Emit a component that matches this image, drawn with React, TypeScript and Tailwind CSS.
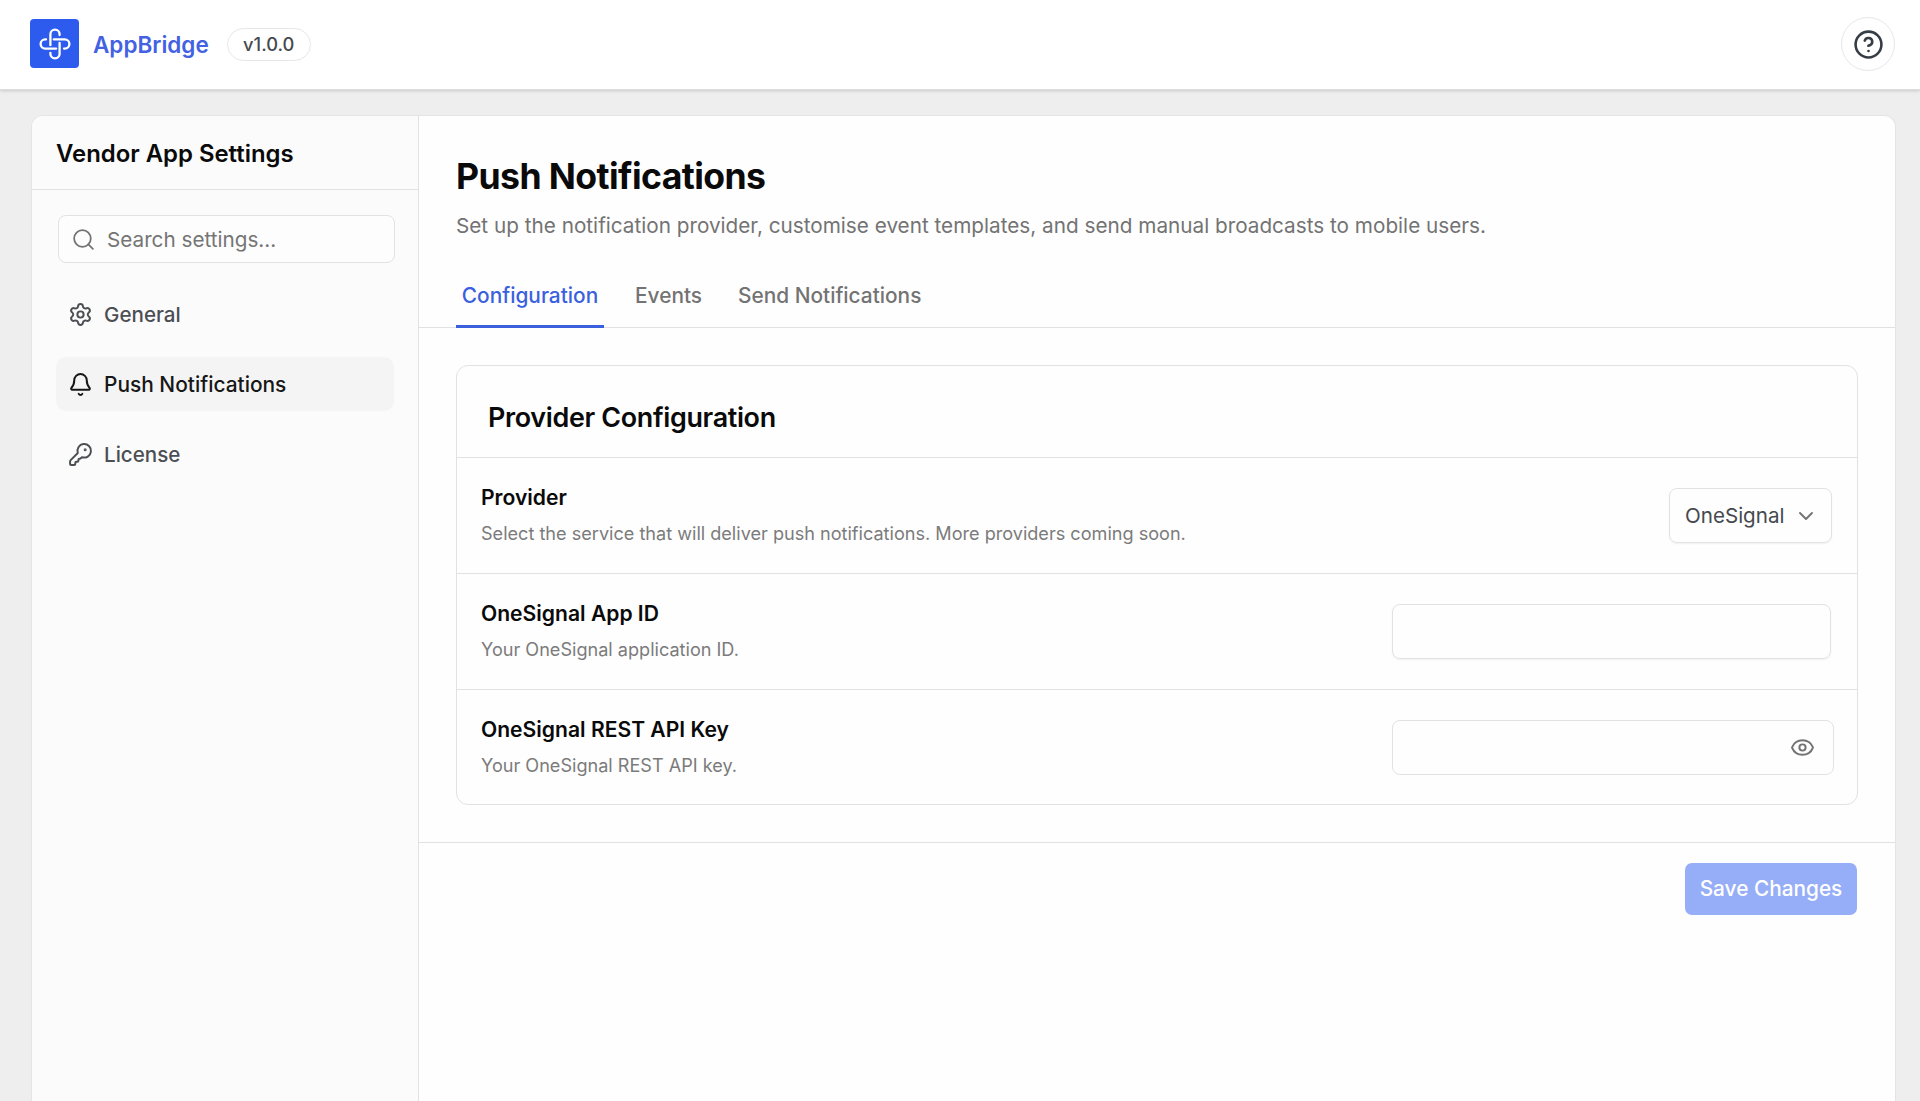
import React from "react";
import { Bell, ChevronDown, CircleHelp, Eye, KeyRound, Search, Settings } from "lucide-react";

const navItems = [
  { label: "General", icon: Settings, active: false },
  { label: "Push Notifications", icon: Bell, active: true },
  { label: "License", icon: KeyRound, active: false },
];

const LogoMark = () => (
  <svg
    viewBox="-16 -16 32 32"
    className="size-8"
    fill="none"
    stroke="white"
    strokeWidth="2.3"
    strokeLinecap="round"
  >
    {[0, 90, 180, 270].map((angle) => (
      <path
        key={angle}
        d="M-4.6 1.2V-9.8a4.6 4.6 0 0 1 9.2 0V-9"
        transform={`rotate(${angle})`}
      />
    ))}
  </svg>
);

const Header = () => (
  <header className="z-10 flex h-[90px] shrink-0 items-center border-b border-[#dedede] bg-white pr-[25px] pb-px pl-[30px] shadow-[0_1px_3px_rgba(0,0,0,0.16)]">
    <div className="mb-px flex size-[49px] items-center justify-center rounded-[4px] bg-[#2d5bee]">
      <LogoMark />
    </div>
    <span className="ml-3.5 pt-px text-[22.5px] font-semibold text-[#4361e2]">AppBridge</span>
    <span className="ml-[18px] flex h-[33px] w-[84px] items-center justify-center rounded-full border border-[#e5e7eb] pt-px text-[18.3px] font-medium text-[#45494f]">
      v1.0.0
    </span>
    <button className="ml-auto flex size-[54px] items-center justify-center rounded-full border border-[#e5e7eb]">
      <CircleHelp className="size-[31px] text-[#373d47]" strokeWidth={2} />
    </button>
  </header>
);

const Sidebar = () => (
  <aside className="w-[387px] shrink-0 border-r border-[#e2e2e2] bg-[#fbfbfb]">
    <div className="flex h-[74px] items-center border-b border-[#e2e2e2] pt-0.5 pl-6">
      <h2 className="text-[23.9px] font-semibold text-[#0a0a0a]">Vendor App Settings</h2>
    </div>
    <div className="mt-[25px] mr-[23px] ml-[26px] flex h-12 items-center rounded-lg border border-[#e2e2e2] bg-[#fdfdfd] pl-3">
      <Search className="size-[25px] text-[#737373]" strokeWidth={1.7} />
      <span className="ml-[11px] pt-px text-[20.7px] text-[#757575]">Search settings...</span>
    </div>
    <nav className="mt-6 mr-6 ml-6 flex flex-col gap-4">
      {navItems.map(({ label, icon: Icon, active }) =>
        active ? (
          <a
            key={label}
            className="flex h-[54px] items-center gap-[11px] rounded-[10px] bg-[#f4f4f4] pl-3 text-[20.9px] font-medium text-[#171717]"
          >
            <Icon className="size-[25px]" strokeWidth={1.9} />
            <span className="pt-0.5">{label}</span>
          </a>
        ) : (
          <a
            key={label}
            className="flex h-[54px] items-center gap-[11px] pl-3 text-[20.6px] font-medium text-[#4b4e53]"
          >
            <Icon className="size-[25px]" strokeWidth={1.9} />
            <span className="pt-0.5">{label}</span>
          </a>
        )
      )}
    </nav>
  </aside>
);

const Tabs = () => (
  <div className="flex h-[60px] gap-6 border-b border-[#e2e2e2] pl-[37px] text-[20.85px] font-medium text-[#737373]">
    <div className="-mb-px flex w-[148px] justify-center border-b-3 border-[#3b60de] pt-3 text-[#3b60de]">
      Configuration
    </div>
    <div className="w-[85px] pt-3 pl-[7px]">Events</div>
    <div className="pt-3 pl-px">Send Notifications</div>
  </div>
);

type SettingRowProps = {
  title: string;
  description: string;
  children: React.ReactNode;
};

const SettingRow = ({ title, description, children }: SettingRowProps) => (
  <div className="flex h-[116px] items-center justify-between border-t border-[#e2e2e2] pr-[25px] pl-6 last:h-[115px]">
    <div className="pb-0.5">
      <h4 className="text-[21.1px] leading-8 font-semibold text-[#0a0a0a]">{title}</h4>
      <p className="mt-[5px] text-[18.1px] leading-7 text-[#7b7b7b]">{description}</p>
    </div>
    {children}
  </div>
);

const ProviderCard = () => (
  <section className="mx-[37px] mt-[37px] rounded-xl border border-[#e2e2e2]">
    <h3 className="h-[91px] pt-[34px] pl-[31px] text-[26.9px] leading-[34px] font-semibold tracking-[-0.33px] text-[#0a0a0a]">
      Provider Configuration
    </h3>
    <SettingRow
      title="Provider"
      description="Select the service that will deliver push notifications. More providers coming soon."
    >
      <button className="flex h-[55px] w-[163px] items-center rounded-lg border border-[#e2e2e2] pl-[15px] text-[20.6px] text-[#45494f] shadow-[0_1px_2px_rgba(0,0,0,0.06)]">
        <span className="pt-0.5">OneSignal</span>
        <ChevronDown className="ml-2.5 size-6 text-[#737373]" strokeWidth={1.9} />
      </button>
    </SettingRow>
    <SettingRow title="OneSignal App ID" description="Your OneSignal application ID.">
      <div className="mr-px h-[55px] w-[439px] rounded-lg border border-[#e2e2e2] shadow-[0_1px_2px_rgba(0,0,0,0.06)]" />
    </SettingRow>
    <SettingRow title="OneSignal REST API Key" description="Your OneSignal REST API key.">
      <div className="-mr-0.5 flex h-[55px] w-[442px] items-center justify-end rounded-lg border border-[#e2e2e2] pr-[18px]">
        <Eye className="size-[25px] text-[#737373]" strokeWidth={1.9} />
      </div>
    </SettingRow>
  </section>
);

const App = () => {
  return (
    <div className="flex h-[1101px] flex-col overflow-hidden bg-[#eeeeee] font-['Inter',sans-serif]">
      <Header />
      <div className="mt-[25px] mr-6 ml-[31px] flex flex-1 overflow-hidden rounded-t-xl border border-b-0 border-[#e4e4e4] bg-[#fefefe]">
        <Sidebar />
        <main className="min-w-0 flex-1">
          <div className="h-[152px] pt-[41px] pl-[37px]">
            <h1 className="text-[35.6px] leading-10 font-bold tracking-[-0.58px] text-[#0a0a0a]">
              Push Notifications
            </h1>
            <p className="mt-[13px] text-[20.72px] leading-8 text-[#737373]">
              Set up the notification provider, customise event templates, and send manual
              broadcasts to mobile users.
            </p>
          </div>
          <Tabs />
          <ProviderCard />
          <div className="mt-[37px] flex justify-end border-t border-[#e2e2e2] pt-5 pr-[38px]">
            <button className="h-[52px] w-[172px] rounded-[7px] bg-[#96adf7] text-[20.8px] font-medium text-white">
              Save Changes
            </button>
          </div>
        </main>
      </div>
    </div>
  );
};

export default App;
